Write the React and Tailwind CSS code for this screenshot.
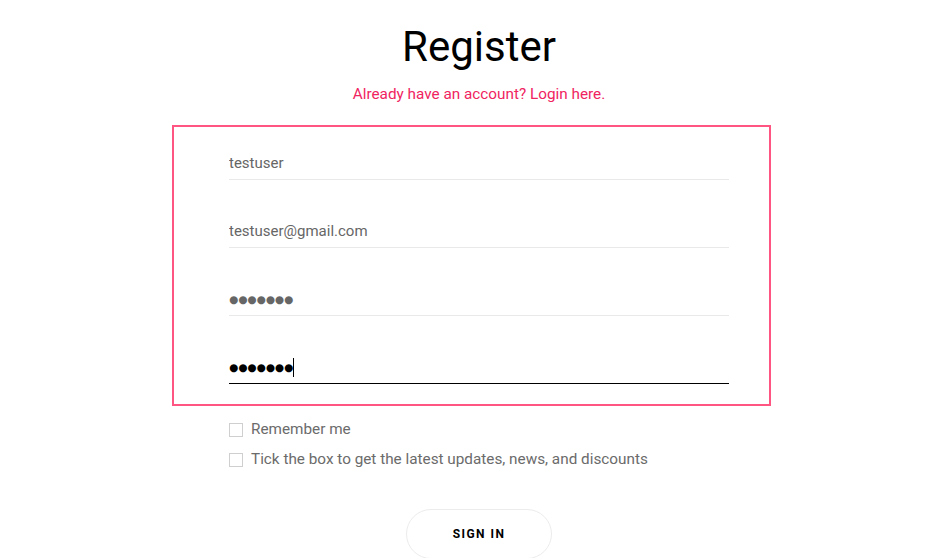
import React from 'react'

const font = { fontFamily: 'Roboto, "Liberation Sans", sans-serif' }
const dots = { fontFamily: '"DejaVu Sans", sans-serif' }

function Field({ value, secret, active }) {
  return (
    <div className="relative">
      <input
        type="text"
        defaultValue={value}
        style={secret ? dots : undefined}
        className={
          active
            ? 'block w-full h-[32px] border-b border-black text-[10.5px] text-black outline-none bg-transparent'
            : secret
            ? 'block w-full h-[32px] border-b border-[#e9e9e9] text-[10.5px] text-[#666] outline-none bg-transparent'
            : 'block w-full h-[32px] border-b border-[#e9e9e9] text-[15px] text-[#666] outline-none bg-transparent'
        }
      />
      {active && <span className="absolute left-[64px] top-[6px] w-px h-[19px] bg-black"></span>}
    </div>
  )
}

function Check({ label }) {
  return (
    <label className="flex items-center gap-2 h-[30px]">
      <span className="w-[14px] h-[14px] border border-[#cfcfcf] bg-white"></span>
      <span className="text-[15.3px] text-[#6b6b6b]">{label}</span>
    </label>
  )
}

export default function App() {
  return (
    <div className="min-h-[558px] bg-white" style={font}>
      <div className="w-[500px] ml-[229px] pt-[26px]">
        <h1 className="text-[42px] leading-none text-black text-center">Register</h1>
        <p className="mt-[15px] text-[15.3px] text-[#f0245f] text-center">
          Already have an account? Login here.
        </p>

        <form className="mt-[19px] -ml-[57px] -mr-[42px] border-2 border-[#ff5582] pl-[55px] pr-[40px] pt-[21px] pb-[20px] flex flex-col gap-[36px]">
          <Field value="testuser" />
          <Field value="testuser@gmail.com" />
          <Field value="●●●●●●●" secret />
          <Field value="●●●●●●●" secret active />
        </form>

        <div className="mt-[9px] flex flex-col">
          <Check label="Remember me" />
          <Check label="Tick the box to get the latest updates, news, and discounts" />
        </div>

        <div className="mt-[34px] flex justify-center">
          <button className="w-[146px] h-[50px] rounded-full border border-[#ececec] bg-white text-[12px] font-bold tracking-[0.12em] text-black">
            SIGN IN
          </button>
        </div>
      </div>
    </div>
  )
}
